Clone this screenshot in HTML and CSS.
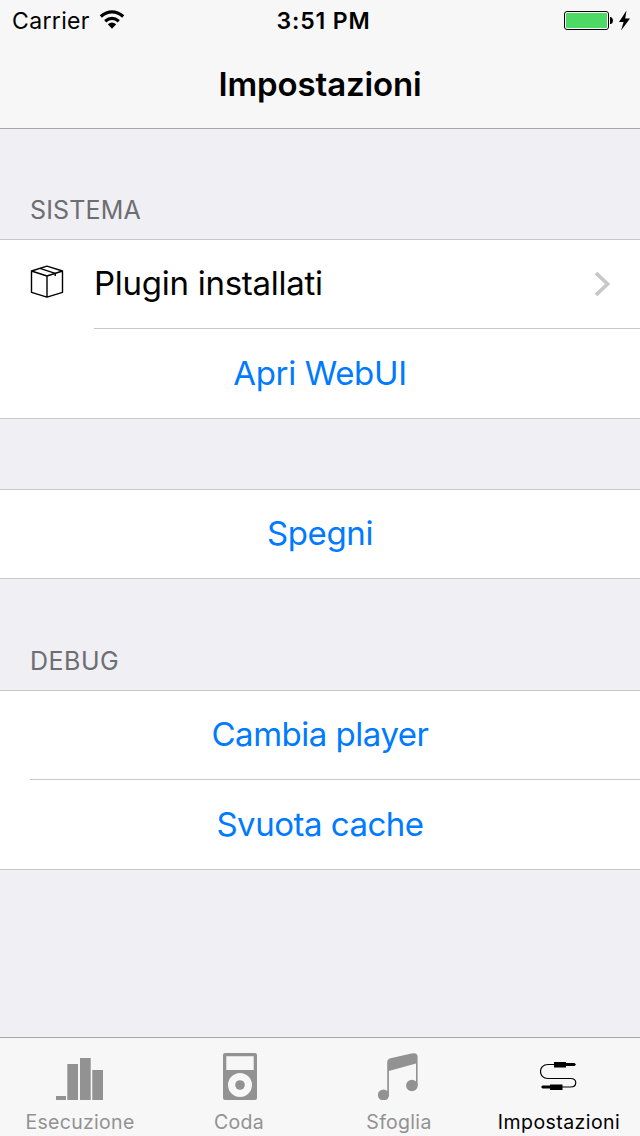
FILE: index.html
```html
<!DOCTYPE html>
<html lang="it">
<head>
<meta charset="utf-8">
<title>Impostazioni</title>
<link rel="stylesheet" href="styles.css">
</head>
<body>
<div class="screen">
  <header class="navbar">
    <div class="status">
      <div class="status-left">
        <span class="carrier">Carrier</span>
        <svg class="wifi" width="26" height="20" viewBox="0 0 26 20">
          <path d="M1.800 6.500Q13 -2.800 24.200 6.500M6.200 11.200Q13 5.600 19.800 11.200" fill="none" stroke="#000" stroke-width="3.300"/>
          <path d="M8.800 14.300Q13 10.800 17.200 14.300L13 18.700Z"/>
        </svg>
      </div>
      <span class="time">3:51 PM</span>
      <div class="status-right">
        <svg width="68" height="24" viewBox="0 0 68 24">
          <rect x=".5" y="1.5" width="44" height="18" rx="2.5" fill="#fff" stroke="#000"/>
          <rect x="2" y="3" width="41" height="15" rx="1" fill="#4cd964"/>
          <path d="M46 7h1q2 1 2 3.500t-2 3.500h-1z"/>
          <path d="M62.500 0.500L55 12h4.600L57 20.500L66 8.500h-4.800z"/>
        </svg>
      </div>
    </div>
    <h1 class="title"><span>Impostazioni</span></h1>
  </header>

  <main class="content">
    <h2 class="section-title">SISTEMA</h2>
    <section class="group">
      <div class="row row-link">
        <svg class="box" width="34" height="34" viewBox="0 0 34 34" fill="none" stroke="#000" stroke-linejoin="round">
          <path stroke-width="1.400" d="M1.500 6L17 1.200L32.500 6V27.300L17 32.200L1.500 27.300ZM1.500 6L17 11L32.500 6M17 11V32"/>
          <path stroke-width="1.400" d="M10 3.400L25.200 8.400V11"/>
        </svg>
        <span class="label plugin">Plugin installati</span>
        <svg class="chevron" width="18" height="28" viewBox="0 0 18 28"><path d="M2 3L13.500 14L2 25" fill="none" stroke="#c7c7cc" stroke-width="3.800"/></svg>
      </div>
      <div class="separator deep"></div>
      <div class="row tall"><span class="label action">Apri WebUI</span></div>
    </section>
    <section class="group power">
      <div class="row"><span class="label action">Spegni</span></div>
    </section>
    <h2 class="section-title debug">DEBUG</h2>
    <section class="group">
      <div class="row"><span class="label action tight">Cambia player</span></div>
      <div class="separator"></div>
      <div class="row tall"><span class="label action tight">Svuota cache</span></div>
    </section>
  </main>

  <nav class="tabs">
    <div class="tab">
      <svg width="48" height="48" viewBox="0 0 48 48" fill="#929292"><path d="M0 44h10v4H0zM11.300 12h10.700v36H11.300zM24 6h10.700v42H24zM36.300 18H47v30H36.300z"/></svg>
      <span class="first">Esecuzione</span>
    </div>
    <div class="tab">
      <svg width="34" height="48" viewBox="0 0 34 48" fill="#929292"><path fill-rule="evenodd" d="M2 1H32Q34 1 34 3V46Q34 48 32 48H2Q0 48 0 46V3Q0 1 2 1ZM3.300 4.300V18H30.700V4.300ZM17 21A12 12 0 1 0 17 45A12 12 0 1 0 17 21Z"/><circle cx="17" cy="33" r="4.800"/></svg>
      <span>Coda</span>
    </div>
    <div class="tab">
      <svg class="shifted" width="42" height="48" viewBox="0 0 42 48" fill="#929292"><path d="M9.200 10Q9.200 7.500 11.500 6.500L33.500 1.500Q39.600 0 39.600 5V34H38V11.500L10.900 19V43H9.200Z"/><circle cx="5.500" cy="43" r="5.600"/><circle cx="33.900" cy="33.500" r="5.800"/></svg>
      <span>Sfoglia</span>
    </div>
    <div class="tab active">
      <svg class="shifted" width="38" height="48" viewBox="0 0 38 48"><path d="M14 12.500H8C-2 12.500-2 26.500 8 26.500H30.500C37.500 26.500 37.500 35 30.500 35H22" fill="none" stroke="#000" stroke-width="1.200"/><path d="M14 10H26v1h8.500l1.500 1.500l-1.500 1.500h-8.500v1.500H14zM22.500 32.500H10V33.600H2.500l-1.500 1.500l1.500 1.500h7.500V38H22.500z"/></svg>
      <span class="wide">Impostazioni</span>
    </div>
  </nav>
</div>
</body>
</html>
```
FILE: styles.css
```css
* { box-sizing: border-box; }
body {
  margin: 0;
  background: #efeff4;
  color: #000;
  font-family: Inter, "Liberation Sans", sans-serif;
}
.screen { display: flex; flex-direction: column; height: 1136px; overflow: hidden; }
svg { display: block; flex: none; }
h1, h2 { margin: 0; font-weight: 400; }
span { white-space: nowrap; }

.navbar { height: 129px; background: #f7f7f7; border-bottom: 1px solid #a7a7aa; }
.status {
  display: grid;
  grid-template-columns: 1fr auto 1fr;
  height: 40px;
  padding: 0 8px 0 12px;
  font-size: 23px;
  line-height: 42px;
}
.status-left { display: flex; gap: 9px; }
.wifi { margin-top: 10px; }
.carrier { letter-spacing: 0.350px; }
.time { padding-left: 3px; font-weight: 600; letter-spacing: 0.850px; }
.status-right { display: flex; justify-content: flex-end; padding-top: 10px; }
.title {
  height: 88px;
  line-height: 88px;
  font-size: 33px;
  font-weight: 600;
  letter-spacing: -0.150px;
  text-align: center;
}

.content { flex: 1; }
.section-title {
  height: 110px;
  padding: 66px 30px 0;
  color: #6d6d72;
  font-size: 25px;
  line-height: 30px;
  letter-spacing: 0.150px;
}
.section-title.debug { height: 111px; padding-top: 67px; letter-spacing: 0.500px; }
.group { background: #fff; border-top: 1px solid #c8c7cc; border-bottom: 1px solid #c8c7cc; }
.power { margin-top: 70px; }
.row { display: flex; align-items: center; justify-content: center; height: 88px; }
.row.tall { height: 89px; }
.row-link { justify-content: flex-start; padding: 0 28px 0 30px; }
.box { margin: -4px 30px 0 0; }
.chevron { margin-left: auto; }
.label { padding-bottom: 2px; font-size: 33px; line-height: 40px; letter-spacing: -0.350px; }
.plugin { letter-spacing: -0.270px; }
.tight { letter-spacing: -0.490px; }
.action { color: #007aff; }
.separator { height: 1px; margin-left: 30px; background: #c8c7cc; }
.separator.deep { margin-left: 94px; }

.tabs {
  display: grid;
  grid-template-columns: repeat(4, 160px);
  height: 99px;
  background: #f7f7f8;
  border-top: 1px solid #a7a7aa;
  color: #929292;
  font-size: 19.500px;
  line-height: 24px;
  letter-spacing: 0.300px;
}
.tab { display: flex; flex-direction: column; align-items: center; gap: 10px; padding-top: 14px; }
.tab span { margin-right: 2px; }
.tab span.first { margin-right: 0; }
.tab.active { color: #000; }
.wide { letter-spacing: 0.430px; }
.shifted { margin-right: 3px; }
```
